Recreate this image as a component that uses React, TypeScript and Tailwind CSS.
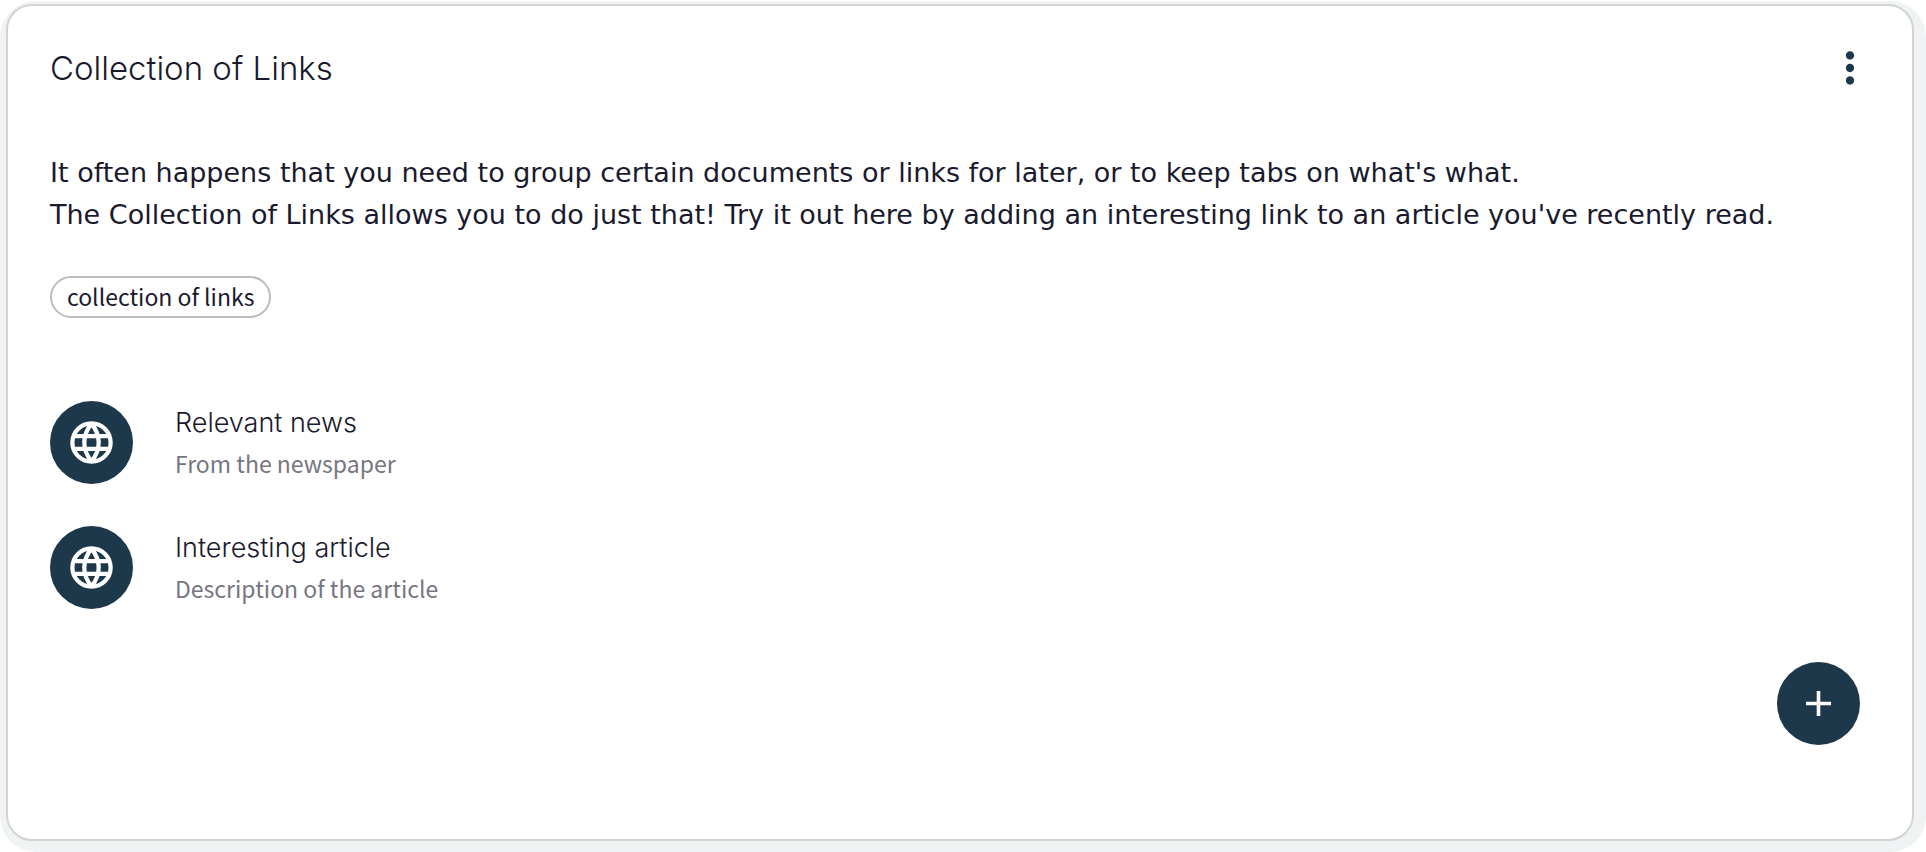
import { MdAdd, MdMoreVert } from "react-icons/md";

const links = [
  { title: "Relevant news", description: "From the newspaper" },
  { title: "Interesting article", description: "Description of the article" },
];

const tags = ["collection of links"];

function GlobeIcon() {
  return (
    <svg
      viewBox="0 0 24 24"
      className="size-[51px]"
      fill="none"
      stroke="currentColor"
      strokeWidth="2"
      aria-hidden="true"
    >
      <circle cx="12" cy="12" r="9" />
      <path d="M12 3Q5.2 12 12 21M12 3Q18.8 12 12 21M3.6 9h16.8M3.6 15h16.8" />
    </svg>
  );
}

function LinkRow({ title, description }: { title: string; description: string }) {
  return (
    <li>
      <a href="#" className="flex items-start gap-[42px]">
        <span className="flex size-[83px] shrink-0 items-center justify-center rounded-full bg-[#1e384b] text-white">
          <GlobeIcon />
        </span>
        <span className="flex flex-col">
          <span className="font-[Inter,sans-serif] text-[27px] leading-[43px] font-light">{title}</span>
          <span className="pb-0.5 font-['Noto_Sans_CJK_SC',sans-serif] text-[23px] leading-[39px] text-[#767681]">
            {description}
          </span>
        </span>
      </a>
    </li>
  );
}

export default function App() {
  return (
    <div className="pt-px text-[#1a1a2e]">
      <div className="rounded-[36px] bg-[#eff3f4] pt-[3px] pr-3 pb-[11px] pl-1.5">
        <main className="rounded-[26px] border-2 border-[#d3d3d3] bg-white pt-[37px] pr-[37px] pb-[94px] pl-[42px]">
          <header className="flex items-center justify-between">
            <h1 className="font-[Inter,sans-serif] text-[33px] leading-[50px] font-light">Collection of Links</h1>
            <button type="button" aria-label="More options" className="text-[#1e384b]">
              <MdMoreVert className="size-[50px]" aria-hidden="true" />
            </button>
          </header>
          <p className="mt-[59px] font-['DejaVu_Sans',sans-serif] text-[27px] leading-[42px]">
            It often happens that you need to group certain documents or links for later, or to keep tabs on what's what.
            <br />
            The Collection of Links allows you to do just that! Try it out here by adding an interesting link to an
            article you've recently read.
          </p>
          <ul className="mt-10 flex">
            {tags.map((tag) => (
              <li
                key={tag}
                className="rounded-full border-2 border-[#bdbdbd] px-[15px] pb-0.5 font-['Noto_Sans_CJK_SC',sans-serif] text-[23px] leading-9"
              >
                {tag}
              </li>
            ))}
          </ul>
          <ul className="mt-[83px] flex flex-col gap-[41px]">
            {links.map((link) => (
              <LinkRow key={link.title} {...link} />
            ))}
          </ul>
          <div className="mt-[52px] flex justify-end pr-[15px]">
            <button
              type="button"
              aria-label="Add link"
              className="flex size-[83px] items-center justify-center rounded-full bg-[#1e384b] text-white"
            >
              <MdAdd className="size-[43px]" aria-hidden="true" />
            </button>
          </div>
        </main>
      </div>
    </div>
  );
}
